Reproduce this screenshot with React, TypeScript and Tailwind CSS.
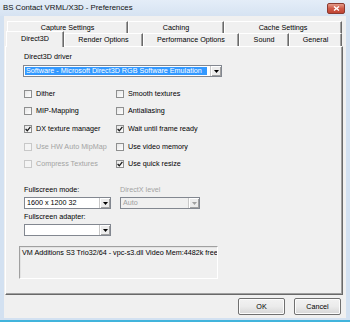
import React from "react";

function Arrow({ disabled }: { disabled?: boolean }) {
  return (
    <svg width="5" height="3" viewBox="0 0 5 3">
      <polygon points="0,0 5,0 2.5,3" fill={disabled ? "#a0a0a0" : "#000"} />
    </svg>
  );
}

function DropBtn({ disabled }: { disabled?: boolean }) {
  return (
    <div className="w-[11px] h-full flex items-center justify-center bg-[#ececec] border-l border-[#c8c8c8] shadow-[inset_1px_1px_0_#ffffff,inset_-1px_-1px_0_#a0a0a0]">
      <Arrow disabled={disabled} />
    </div>
  );
}

function Combo({
  text,
  width,
  highlight,
  disabled,
}: {
  text: string;
  width: string;
  highlight?: boolean;
  disabled?: boolean;
}) {
  return (
    <div
      className={`${width} h-[12px] flex border border-[#828790] ${
        disabled ? "bg-[#f0f0f0]" : "bg-white"
      }`}
    >
      <div className="flex-1 min-w-0 p-[1px] flex items-stretch overflow-hidden">
        {highlight ? (
          <div className="bg-[#3399ff] text-white whitespace-nowrap overflow-hidden px-[1px] leading-[8px] flex items-center w-full mr-[2px]">
            {text}
          </div>
        ) : (
          <div
            className={`whitespace-nowrap overflow-hidden px-[1px] leading-[8px] flex items-center ${
              disabled ? "text-[#a0a0a0]" : "text-black"
            }`}
          >
            {text}
          </div>
        )}
      </div>
      <DropBtn disabled={disabled} />
    </div>
  );
}

function Check({
  label,
  checked,
  disabled,
}: {
  label: string;
  checked?: boolean;
  disabled?: boolean;
}) {
  return (
    <div className="flex items-center gap-[4px] h-[17.67px]">
      <div
        className={`w-[8px] h-[8px] border flex items-center justify-center ${
          disabled
            ? "border-[#c8c8c8] bg-[#f4f4f4]"
            : "border-[#8e8f8f] bg-gradient-to-br from-[#e6e6e6] to-white"
        }`}
      >
        {checked && (
          <svg width="6" height="6" viewBox="0 0 6 6">
            <path d="M0.6 3 L2.3 4.8 L5.4 0.8" stroke="#1a1a1a" strokeWidth="1.3" fill="none" />
          </svg>
        )}
      </div>
      <span className={disabled ? "text-[#a3a3a3]" : "text-black"}>{label}</span>
    </div>
  );
}

function Tab({
  label,
  width,
  selected,
}: {
  label: string;
  width: string;
  selected?: boolean;
}) {
  if (selected) {
    return (
      <div
        className={`${width} h-[16px] -mb-[1px] relative z-10 bg-[#f0f0f0] border-t border-l border-white shadow-[inset_-1px_0_0_#a0a0a0] border-r border-r-[#696969] flex items-center justify-center pb-[2px]`}
      >
        {label}
      </div>
    );
  }
  return (
    <div
      className={`${width} h-full bg-[#f0f0f0] border-t border-l border-white border-r border-r-[#696969] shadow-[inset_-1px_0_0_#a0a0a0] flex items-center justify-center`}
    >
      {label}
    </div>
  );
}

function Button({ label }: { label: string }) {
  return (
    <div className="w-[47px] h-[17px] rounded-[2px] border border-[#707070] bg-gradient-to-b from-[#f2f2f2] via-[#ebebeb] to-[#d6d6d6] flex items-center justify-center text-black shadow-[inset_0_0_0_1px_#fcfcfc]">
      {label}
    </div>
  );
}

export default function App() {
  return (
    <div className="w-[350px] h-[322px] bg-[#d3e1f1] flex flex-col overflow-hidden font-['Liberation_Sans',Arial,sans-serif] text-[7.2px] leading-[10px] text-black">
      {/* Title bar */}
      <div className="h-[16px] flex items-center justify-between pl-[3px] pr-[5px] bg-gradient-to-b from-[#e4edf8] to-[#d6e3f2]">
        <span className="text-[7.8px] text-[#111]">BS Contact VRML/X3D - Preferences</span>
        <div className="w-[18px] h-[11px] mt-[1px] rounded-[2px] border border-[#8a3a30] bg-gradient-to-b from-[#e39a8a] via-[#cf5a48] to-[#c04432] flex items-center justify-center">
          <svg width="7" height="5" viewBox="0 0 7 5">
            <path d="M1 0.5 L6 4.5 M6 0.5 L1 4.5" stroke="#fff" strokeWidth="1.4" />
          </svg>
        </div>
      </div>

      {/* Client */}
      <div className="flex-1 mx-[4px] bg-[#f0f0f0] flex flex-col">
        {/* Tabs row 1 */}
        <div className="h-[12px] mt-[5px] ml-[3px] flex">
          <Tab label="Capture Settings" width="w-[121px]" />
          <Tab label="Caching" width="w-[96px]" />
          <Tab label="Cache Settings" width="w-[118px]" />
        </div>
        {/* Tabs row 2 */}
        <div className="h-[13px] ml-[2px] flex items-end">
          <Tab label="Direct3D" width="w-[58px]" selected />
          <div className="h-full flex">
            <Tab label="Render Options" width="w-[79px]" />
            <Tab label="Performance Options" width="w-[96px]" />
            <Tab label="Sound" width="w-[50px]" />
            <Tab label="General" width="w-[53px]" />
          </div>
        </div>

        {/* Panel */}
        <div className="ml-[1px] w-[338px] h-[249px] border-t border-l border-white border-r border-b border-r-[#696969] border-b-[#696969] shadow-[inset_-1px_-1px_0_#a0a0a0] pl-[18px] flex flex-col">
          <div className="mt-[5px] h-[10px] flex items-center">Direct3D driver</div>
          <div className="mt-[3px] -ml-[1px]">
            <Combo
              text="Software - Microsoft Direct3D RGB Software Emulation"
              width="w-[199px]"
              highlight
            />
          </div>

          <div className="mt-[8px] grid grid-cols-[92px_1fr]">
            <div className="flex flex-col">
              <Check label="Dither" />
              <Check label="MIP-Mapping" />
              <Check label="DX texture manager" checked />
              <Check label="Use HW Auto MipMap" disabled />
              <Check label="Compress Textures" disabled />
            </div>
            <div className="flex flex-col">
              <Check label="Smooth textures" />
              <Check label="Antialiasing" />
              <Check label="Wait until frame ready" checked />
              <Check label="Use video memory" />
              <Check label="Use quick resize" checked />
            </div>
          </div>

          <div className="mt-[12px] flex">
            <div className="w-[96px] h-[10px] flex items-center">Fullscreen mode:</div>
            <div className="h-[10px] flex items-center text-[#a3a3a3]">DirectX level</div>
          </div>
          <div className="mt-[2px] flex gap-[9px]">
            <Combo text="1600 x 1200  32" width="w-[87px]" />
            <Combo text="Auto" width="w-[80px]" disabled />
          </div>
          <div className="mt-[3px] h-[10px] flex items-center">Fullscreen adapter:</div>
          <div className="mt-[2px]">
            <Combo text="" width="w-[87px]" />
          </div>

          <div className="mt-[10px] -ml-[5px] w-[199px] h-[33px] border-t border-l border-[#a0a0a0] border-r border-b border-r-white border-b-white shadow-[inset_1px_1px_0_#e3e3e3] overflow-hidden px-[2px] pt-[1px]">
            <div className="whitespace-nowrap">
              VM Additions S3 Trio32/64 - vpc-s3.dll Video Mem:4482k free
            </div>
          </div>
        </div>

        {/* Buttons */}
        <div className="mt-[3px] flex justify-end gap-[9px] pr-[5px]">
          <Button label="OK" />
          <Button label="Cancel" />
        </div>
      </div>

      {/* Bottom frame */}
      <div className="h-[2px]" />
      <div className="h-[2px] bg-[#41b4dc]" />
    </div>
  );
}
